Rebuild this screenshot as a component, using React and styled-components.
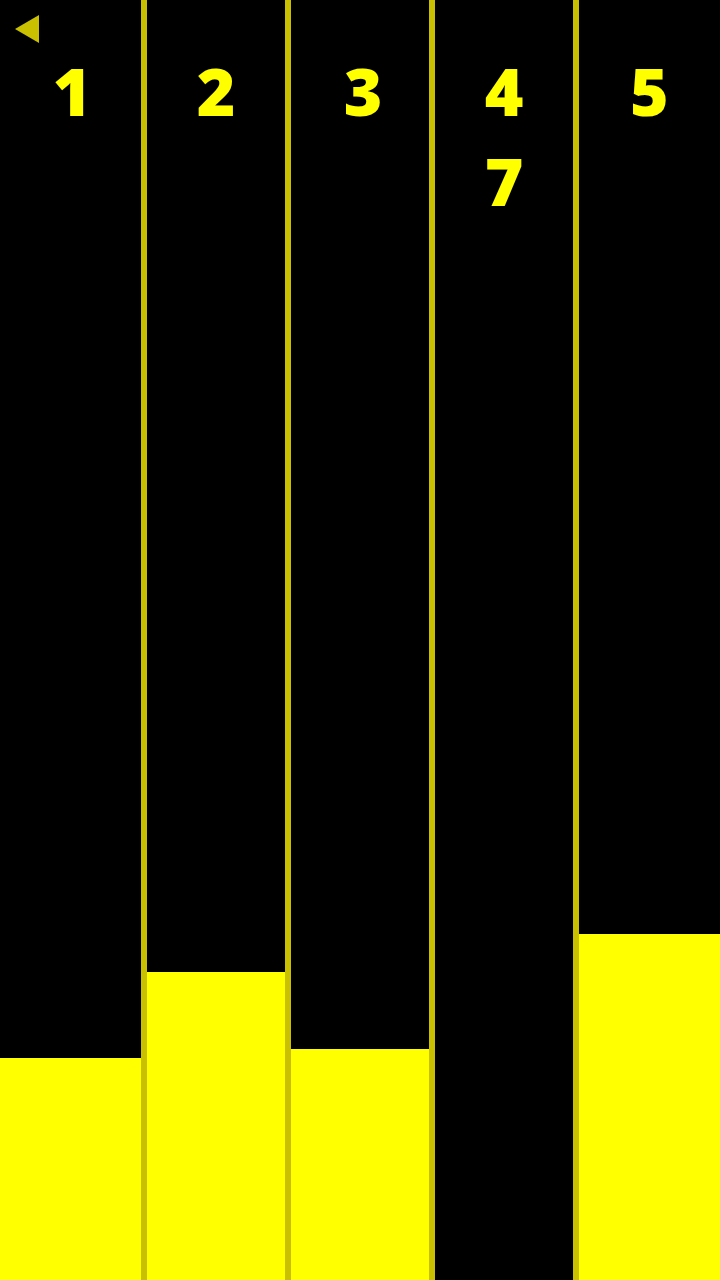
import React from 'react';
import styled, { createGlobalStyle } from 'styled-components';

const GlobalStyle = createGlobalStyle`
  html, body, #root {
    margin: 0;
    padding: 0;
    height: 100%;
    background: #000;
  }
`;

const Board = styled.div`
  position: relative;
  display: grid;
  grid-template-columns: 141.25px 138.5px 138.5px 138.5px 141.25px;
  column-gap: 5.5px;
  width: 720px;
  height: 1280px;
  background: #c8c000;
  overflow: hidden;
`;

const Column = styled.div`
  display: flex;
  flex-direction: column;
  justify-content: space-between;
  background: #000;
`;

const Labels = styled.div`
  display: flex;
  flex-direction: column;
  align-items: center;
  padding-top: 45px;
  padding-left: ${p => p.$shift || 0}px;
  font-family: "Open Sans", "Liberation Sans", sans-serif;
  font-weight: 800;
  font-size: 66px;
  line-height: 90px;
  color: #ffff00;
`;

const Bar = styled.div`
  height: ${p => p.$height}px;
  background: #ffff00;
`;

const BackButton = styled.div`
  position: absolute;
  top: 15px;
  left: 15px;
  width: 0;
  height: 0;
  border-top: 14px solid transparent;
  border-bottom: 14px solid transparent;
  border-right: 24px solid #c8c000;
`;

const columns = [
  { labels: ['1'], bar: 222, shift: 3 },
  { labels: ['2'], bar: 308, shift: 0 },
  { labels: ['3'], bar: 231, shift: 6 },
  { labels: ['4', '7'], bar: 0, shift: -6 },
  { labels: ['5'], bar: 346, shift: -3 },
];

const App = () => (
  <>
    <GlobalStyle />
    <Board>
      {columns.map((c, i) => (
        <Column key={i}>
          <Labels $shift={c.shift}>
            {c.labels.map(l => <span key={l}>{l}</span>)}
          </Labels>
          <Bar $height={c.bar} />
        </Column>
      ))}
      <BackButton />
    </Board>
  </>
);

export default App;
